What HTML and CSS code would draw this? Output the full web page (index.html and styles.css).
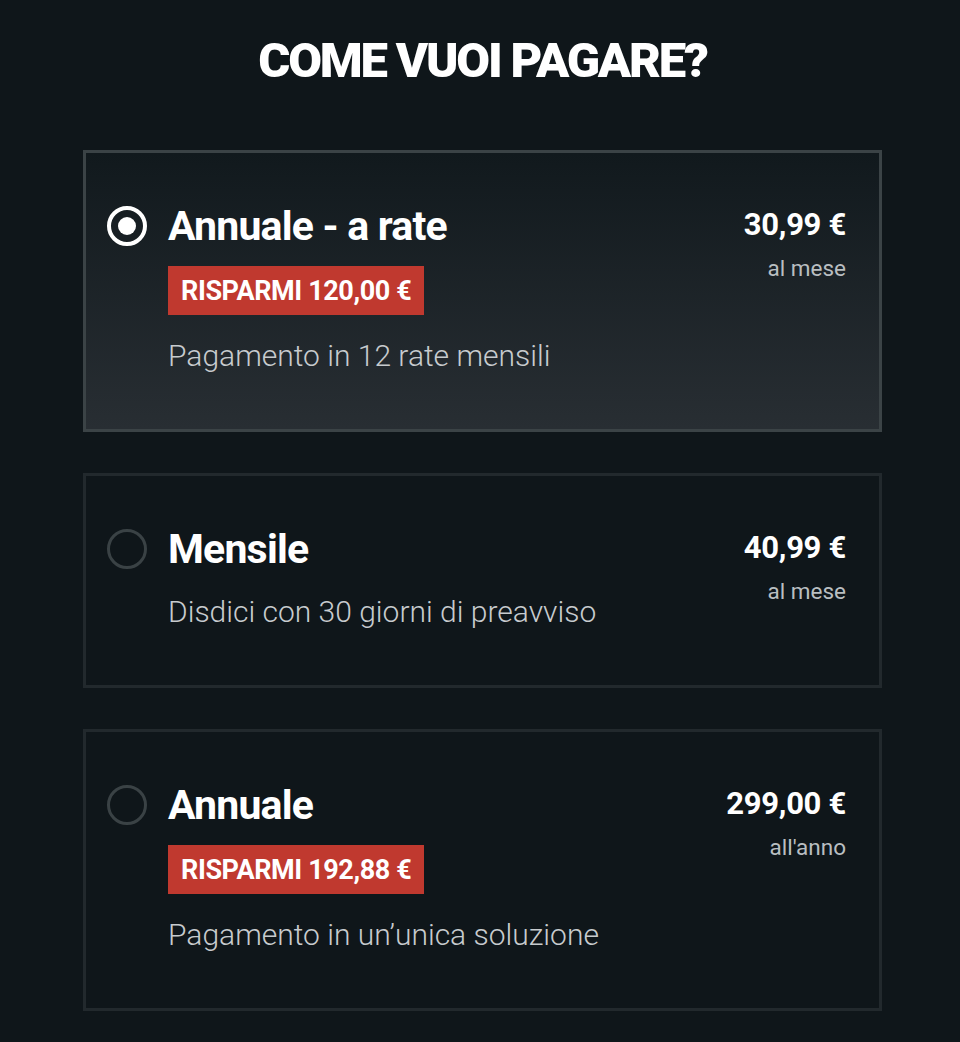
FILE: index.html
```html
<!DOCTYPE html>
<html lang="it">
  <head>
    <meta charset="utf-8">
    <title>Come vuoi pagare?</title>
    <link rel="stylesheet" href="styles.css">
  </head>
  <body>
    <div class="checkout">
      <h1>COME VUOI PAGARE?</h1>

      <div class="plans">
        <label class="plan selected">
          <span class="radio"></span>
          <div class="info">
            <h2>Annuale - a rate</h2>
            <span class="badge">RISPARMI 120,00 &euro;</span>
            <p>Pagamento in 12 rate mensili</p>
          </div>
          <div class="price">
            <strong>30,99 &euro;</strong>
            <span>al mese</span>
          </div>
        </label>

        <label class="plan">
          <span class="radio"></span>
          <div class="info">
            <h2>Mensile</h2>
            <p>Disdici con 30 giorni di preavviso</p>
          </div>
          <div class="price">
            <strong>40,99 &euro;</strong>
            <span>al mese</span>
          </div>
        </label>

        <label class="plan">
          <span class="radio"></span>
          <div class="info">
            <h2>Annuale</h2>
            <span class="badge">RISPARMI 192,88 &euro;</span>
            <p>Pagamento in un&rsquo;unica soluzione</p>
          </div>
          <div class="price">
            <strong>299,00 &euro;</strong>
            <span>all'anno</span>
          </div>
        </label>
      </div>
    </div>
  </body>
</html>
```

FILE: styles.css
```css
body {
  margin: 0;
  background: #0f161a;
  color: #fff;
  font-family: Roboto, "Liberation Sans", sans-serif;
}

.checkout {
  width: 799px;
  margin: 0 0 0 83px;
  padding: 31px 0 0;
}

h1 {
  margin: 0 0 59px;
  text-align: center;
  font-size: 49px;
  line-height: 60px;
  font-weight: 900;
  letter-spacing: -2.2px;
}

.plans {
  display: flex;
  flex-direction: column;
  gap: 41px;
}

.plan {
  display: flex;
  align-items: flex-start;
  gap: 21px;
  padding: 51px 33px 55px 21px;
  border: 3px solid #22292d;
  cursor: pointer;
}

.plan.selected {
  border-color: #3b4346;
  background: linear-gradient(to bottom, #11191d 0%, #282e33 100%);
}

.radio {
  flex: none;
  width: 34px;
  height: 34px;
  margin-top: 2px;
  border: 3px solid #3a4245;
  border-radius: 50%;
  position: relative;
}

.selected .radio {
  border: 4px solid #fff;
  width: 32px;
  height: 32px;
}

.selected .radio::after {
  content: '';
  position: absolute;
  top: 7px;
  left: 7px;
  width: 18px;
  height: 18px;
  border-radius: 50%;
  background: #fff;
}

.info {
  flex: 1;
}

h2 {
  margin: 0;
  font-size: 41px;
  line-height: 44px;
  font-weight: 700;
  letter-spacing: -0.8px;
}

.badge {
  display: inline-block;
  margin-top: 18px;
  padding: 0 13px;
  height: 49px;
  line-height: 50px;
  background: #c0392f;
  font-size: 27px;
  font-weight: 700;
  letter-spacing: -0.4px;
}

.info p {
  margin: 23px 0 0;
  font-size: 30px;
  line-height: 36px;
  font-weight: 300;
  color: #c7cbce;
}

.price {
  margin-top: 4px;
  text-align: right;
}

.price strong {
  display: block;
  font-size: 31px;
  line-height: 34px;
  font-weight: 700;
  letter-spacing: -0.3px;
}

.price span {
  display: block;
  margin-top: 13px;
  font-size: 22.5px;
  line-height: 26px;
  color: #b9bec1;
}
```
